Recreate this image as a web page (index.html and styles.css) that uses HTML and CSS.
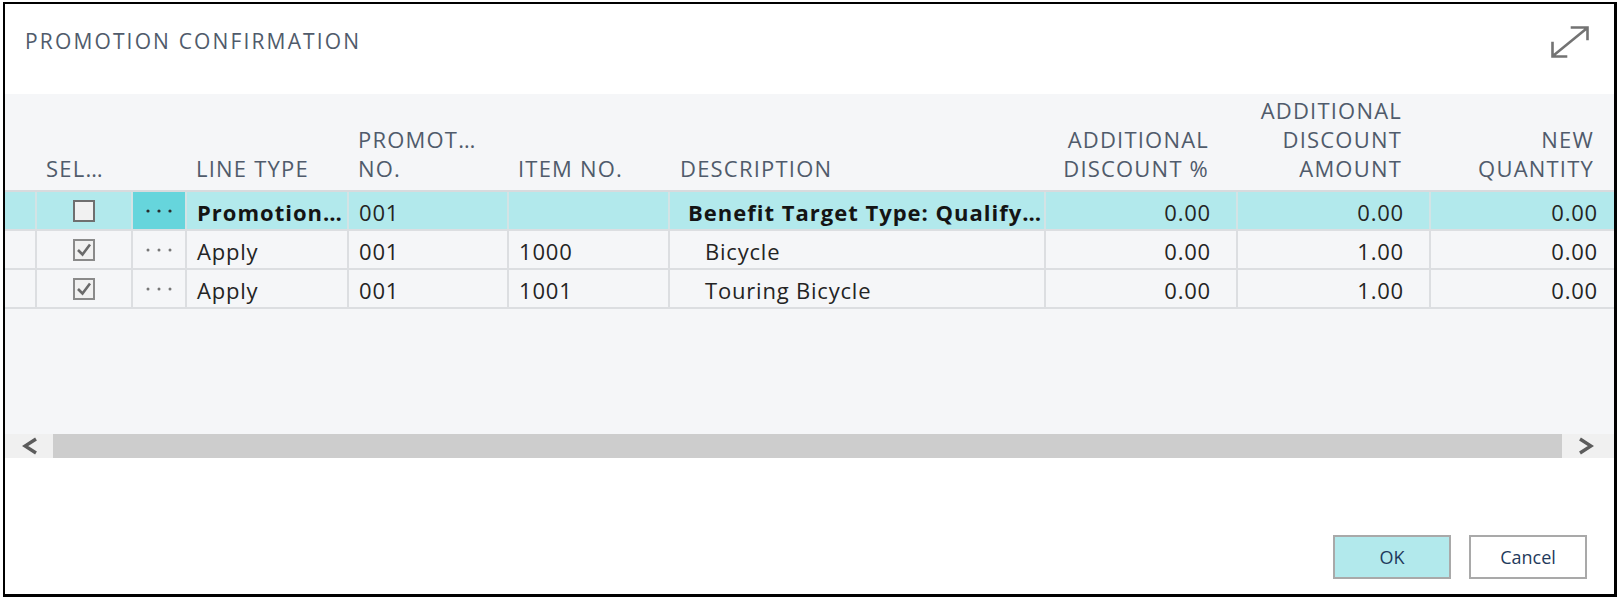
FILE: index.html
```html
<!DOCTYPE html>
<html lang="en">
<head>
<meta charset="utf-8">
<title>Promotion Confirmation</title>
<link rel="stylesheet" href="styles.css">
</head>
<body>
<div class="dialog">
  <div class="titlebar">
    <h1 class="title">PROMOTION CONFIRMATION</h1>
    <svg class="expand" width="40" height="34" viewBox="0 0 40 34" aria-hidden="true">
      <path d="M22 2.5 H37.5 V14 M2.5 18 V31.5 H16 M3.5 30.5 L36.5 3.5" fill="none" stroke="#737373" stroke-width="2.6" stroke-linecap="square"/>
    </svg>
  </div>

  <div class="gridarea">
    <div class="grid">
      <div class="row head">
        <div class="hc"></div>
        <div class="hc">SEL<span class="ell">…</span></div>
        <div class="hc"></div>
        <div class="hc">LINE TYPE</div>
        <div class="hc">PROMOT<span class="ell">…</span><br>NO.</div>
        <div class="hc">ITEM NO.</div>
        <div class="hc desc-h">DESCRIPTION</div>
        <div class="hc r">ADDITIONAL<br>DISCOUNT %</div>
        <div class="hc r">ADDITIONAL<br>DISCOUNT<br>AMOUNT</div>
        <div class="hc r last">NEW<br>QUANTITY</div>
      </div>

      <div class="row data sel">
        <div class="dc"></div>
        <div class="dc chk">
          <svg width="22" height="22" viewBox="0 0 22 22"><rect x="1" y="1" width="20" height="20" fill="#f1f1f1" stroke="#6f6f6f" stroke-width="2"/></svg>
        </div>
        <div class="dc dots active"><svg width="26" height="6" viewBox="0 0 26 6"><circle cx="2" cy="3" r="1.6"/><circle cx="13" cy="3" r="1.6"/><circle cx="24" cy="3" r="1.6"/></svg></div>
        <div class="dc b">Promotion<span class="ell">…</span></div>
        <div class="dc">001</div>
        <div class="dc"></div>
        <div class="dc desc b">Benefit Target Type: Qualify<span class="ell">…</span></div>
        <div class="dc r">0.00</div>
        <div class="dc r">0.00</div>
        <div class="dc r last">0.00</div>
      </div>

      <div class="row data">
        <div class="dc"></div>
        <div class="dc chk">
          <svg width="22" height="22" viewBox="0 0 22 22"><rect x="1" y="1" width="20" height="20" fill="#f1f1f1" stroke="#8a8a8a" stroke-width="2"/><path d="M5 11 L9.5 15.5 L17 5.5" fill="none" stroke="#6a6a6a" stroke-width="2.6"/></svg>
        </div>
        <div class="dc dots"><svg width="26" height="6" viewBox="0 0 26 6"><circle cx="2" cy="3" r="1.5"/><circle cx="13" cy="3" r="1.5"/><circle cx="24" cy="3" r="1.5"/></svg></div>
        <div class="dc">Apply</div>
        <div class="dc">001</div>
        <div class="dc">1000</div>
        <div class="dc desc sub">Bicycle</div>
        <div class="dc r">0.00</div>
        <div class="dc r">1.00</div>
        <div class="dc r last">0.00</div>
      </div>

      <div class="row data">
        <div class="dc"></div>
        <div class="dc chk">
          <svg width="22" height="22" viewBox="0 0 22 22"><rect x="1" y="1" width="20" height="20" fill="#f1f1f1" stroke="#8a8a8a" stroke-width="2"/><path d="M5 11 L9.5 15.5 L17 5.5" fill="none" stroke="#6a6a6a" stroke-width="2.6"/></svg>
        </div>
        <div class="dc dots"><svg width="26" height="6" viewBox="0 0 26 6"><circle cx="2" cy="3" r="1.5"/><circle cx="13" cy="3" r="1.5"/><circle cx="24" cy="3" r="1.5"/></svg></div>
        <div class="dc">Apply</div>
        <div class="dc">001</div>
        <div class="dc">1001</div>
        <div class="dc desc sub">Touring Bicycle</div>
        <div class="dc r">0.00</div>
        <div class="dc r">1.00</div>
        <div class="dc r last">0.00</div>
      </div>
    </div>

    <div class="scrollbar">
      <div class="sb-btn sb-left"><svg width="16" height="18" viewBox="0 0 16 18"><polyline points="14,2 3,9 14,16" fill="none" stroke="#5c5c5c" stroke-width="3.4"/></svg></div>
      <div class="sb-thumb"></div>
      <div class="sb-btn sb-right"><svg width="16" height="18" viewBox="0 0 16 18"><polyline points="2,2 13,9 2,16" fill="none" stroke="#5c5c5c" stroke-width="3.4"/></svg></div>
    </div>
  </div>

  <div class="footer">
    <button class="btn ok" type="button">OK</button>
    <button class="btn" type="button">Cancel</button>
  </div>
</div>
</body>
</html>
```

FILE: styles.css
```css
* { box-sizing: border-box; }

html, body {
  margin: 0;
  padding: 0;
  background: #ffffff;
}

body {
  font-family: "Open Sans", "Noto Sans", "Liberation Sans", sans-serif;
  color: #222222;
}

.dialog {
  margin: 2px 0 0 3px;
  width: 1614px;
  height: 595px;
  border-style: solid;
  border-color: #000000;
  border-width: 2px 3px 3px 2px;
  display: flex;
  flex-direction: column;
  overflow: hidden;
  background: #ffffff;
}

/* ---------- title bar ---------- */
.titlebar {
  height: 90px;
  flex: 0 0 90px;
  display: flex;
  justify-content: space-between;
  align-items: flex-start;
  padding: 0 24px 0 20px;
}

.title {
  margin: 0;
  padding-top: 23px;
  font-size: 21px;
  line-height: 28px;
  font-weight: 400;
  letter-spacing: 2.15px;
  color: #505b6b;
}

.expand {
  margin-top: 21px;
}

/* ---------- grid ---------- */
.gridarea {
  height: 364px;
  flex: 0 0 364px;
  background: #f5f6f8;
  display: flex;
  flex-direction: column;
}

.grid {
  flex: 1;
  overflow: hidden;
}

.row {
  display: grid;
  grid-template-columns: 32px 96px 54px 162px 160px 161px 376px 192px 193px 183px;
}

.head {
  height: 98px;
  border-bottom: 2px solid #d8dadd;
  align-items: end;
}

.hc {
  padding: 0 10px 7px 9px;
  font-size: 22px;
  line-height: 29px;
  letter-spacing: 1.2px;
  color: #505b6b;
  white-space: nowrap;
}

.ell { letter-spacing: 0; }

.hc.desc-h { padding-left: 10px; }

.hc.r {
  text-align: right;
  padding-right: 29px;
}

.hc.r.last { padding-right: 20px; }

.data {
  height: 39px;
  border-bottom: 2px solid #dcdee1;
}

.dc {
  display: flex;
  align-items: center;
  padding: 2px 10px 0 10px;
  font-size: 22px;
  letter-spacing: 0.8px;
  color: #242424;
  white-space: nowrap;
  overflow: hidden;
  border-right: 2px solid #dcdee1;
}

.dc.r {
  justify-content: flex-end;
  padding-right: 25px;
}

.dc.r.last { border-right: none; padding-right: 16px; }

.dc.b {
  font-weight: 700;
  color: #141414;
  letter-spacing: 1px;
}

.dc.desc { padding-left: 18px; }
.dc.desc.sub { padding-left: 35px; }

.dc.chk,
.dc.dots {
  justify-content: center;
  padding: 0;
}

.dots svg { fill: #777777; }
.dots.active svg { fill: #2a2a2a; }

.sel .dc { background: #b2e9ec; border-right-color: #d3e3e5; }
.sel .dc.dots.active { background: #66d5dc; }

/* ---------- scrollbar ---------- */
.scrollbar {
  height: 24px;
  flex: 0 0 24px;
  display: flex;
}

.sb-btn {
  background: #f0f0f0;
  display: flex;
  align-items: center;
}

.sb-left { width: 48px; padding-left: 17px; }
.sb-right { width: 52px; padding-left: 16px; }

.sb-thumb {
  flex: 1;
  background: #cdcdcd;
}

/* ---------- footer ---------- */
.footer {
  flex: 1;
  display: flex;
  justify-content: flex-end;
  align-items: flex-end;
  gap: 18px;
  padding: 0 27px 15px 0;
}

.btn {
  width: 118px;
  height: 44px;
  border: 2px solid #a9a9a9;
  background: #ffffff;
  font-family: "Open Sans", "Noto Sans", sans-serif;
  font-size: 18px;
  color: #1f3a5c;
  padding: 0;
  margin: 0;
}

.btn.ok { background: #b2e9ec; }
```
